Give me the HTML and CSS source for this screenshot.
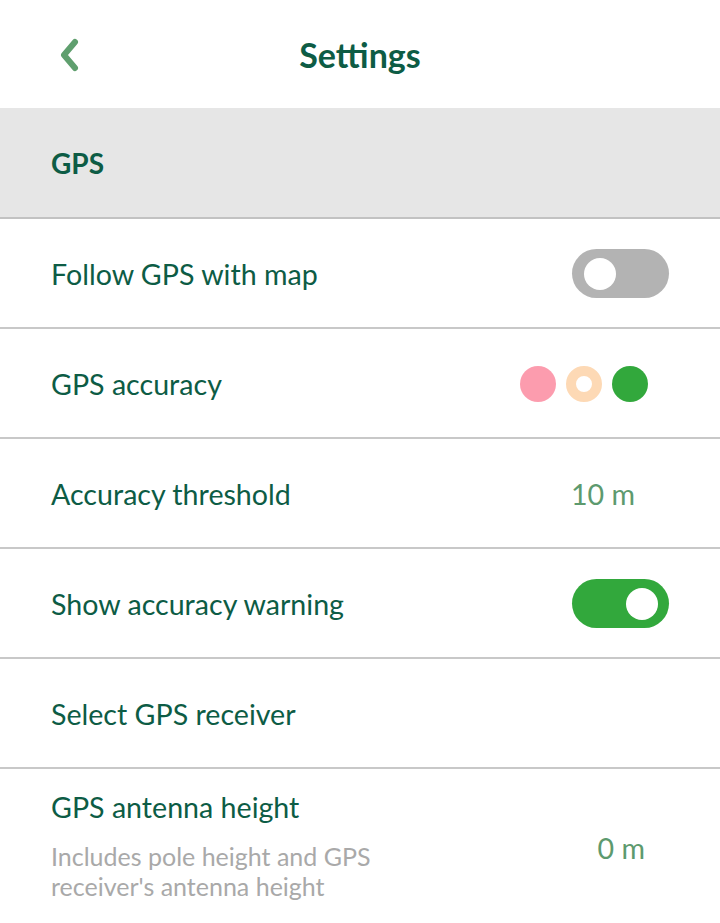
FILE: index.html
```html
<!DOCTYPE html>
<html>
<head>
<meta charset="utf-8">
<link rel="stylesheet" href="styles.css">
</head>
<body>
<div class="app">
  <header class="topbar">
    <svg class="back" width="24" height="34" viewBox="0 0 24 34"><path d="M18 4 L7 17 L18 30" fill="none" stroke="#5f9f6e" stroke-width="6" stroke-linecap="round" stroke-linejoin="round"/></svg>
    <h1 class="title">Settings</h1>
  </header>
  <div class="section">GPS</div>
  <div class="row">
    <span class="label">Follow GPS with map</span>
    <span class="toggle off"><span class="knob"></span></span>
  </div>
  <div class="row">
    <span class="label">GPS accuracy</span>
    <span class="dots"><span class="dot pink"></span><span class="dot ring"></span><span class="dot green"></span></span>
  </div>
  <div class="row">
    <span class="label">Accuracy threshold</span>
    <span class="value v10">10 m</span>
  </div>
  <div class="row">
    <span class="label">Show accuracy warning</span>
    <span class="toggle on"><span class="knob"></span></span>
  </div>
  <div class="row">
    <span class="label">Select GPS receiver</span>
  </div>
  <div class="row tall">
    <div class="stack">
      <span class="label">GPS antenna height</span>
      <span class="desc">Includes pole height and GPS<br>receiver's antenna height</span>
    </div>
    <span class="value v0">0 m</span>
  </div>
</div>
</body>
</html>
```
FILE: styles.css
```css
* { box-sizing: border-box; }
html, body { margin: 0; padding: 0; background: #fff; }
body { font-family: Lato, "Open Sans", sans-serif; color: #0d5c45; width: 720px; height: 923px; overflow: hidden; }
.topbar { height: 108px; display: flex; align-items: center; justify-content: center; position: relative; }
.back { position: absolute; left: 57px; top: 38px; }
.title { margin: 0; font-size: 34px; font-weight: 700; color: #0d5c45; }
.section { height: 111px; background: #e6e6e6; border-bottom: 2px solid #c2c2c2; display: flex; align-items: center; padding-left: 51px; font-weight: 700; font-size: 28px; }
.row { height: 110px; border-bottom: 2px solid #c8c8c8; display: flex; align-items: center; justify-content: space-between; padding-left: 51px; padding-right: 51px; padding-top: 1px; }
.label { font-size: 28.6px; color: #0d5c45; line-height: 34px; }
.toggle { width: 97px; height: 49px; border-radius: 25px; display: flex; align-items: center; padding: 0 12px; }
.toggle.off { background: #b3b3b3; justify-content: flex-start; }
.toggle.on { background: #32a83c; justify-content: flex-end; padding-right: 11px; }
.knob { width: 32px; height: 32px; border-radius: 50%; background: #fff; }
.dots { display: flex; gap: 10px; margin-right: 21px; }
.dot { width: 36px; height: 36px; border-radius: 50%; }
.pink { background: #fc9cae; }
.ring { border: 10px solid #fdd9b5; background: #fff; }
.green { background: #32a83c; }
.value { font-size: 28.6px; color: #5d9a6e; }
.v10 { margin-right: 34px; }
.v0 { margin-right: 24px; }
.row.tall { height: 160px; border-bottom: none; align-items: flex-start; padding-top: 21px; }
.row.tall .value { align-self: center; margin-top: -24px; }
.stack { display: flex; flex-direction: column; }
.desc { font-size: 25px; color: #a9a9a9; line-height: 30px; margin-top: 17px; }
```
